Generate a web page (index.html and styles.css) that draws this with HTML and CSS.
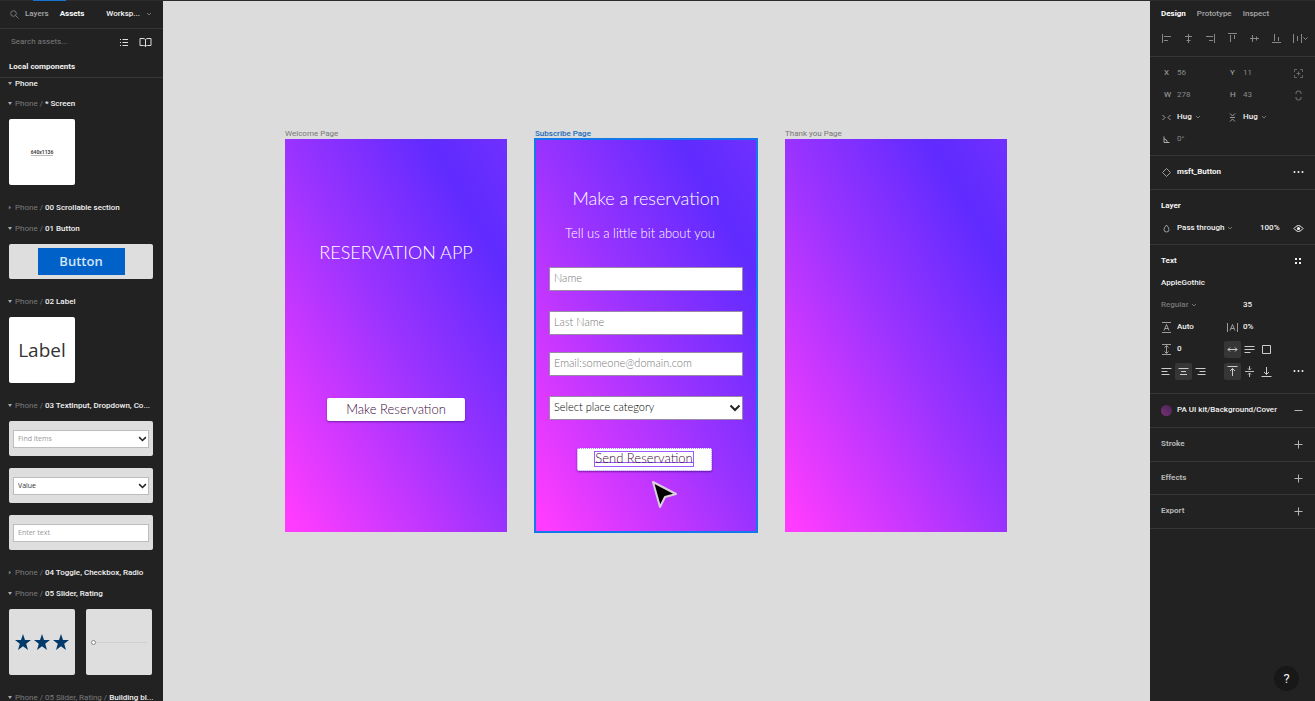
FILE: index.html
```html
<!DOCTYPE html>
<html lang="en">
<head>
<meta charset="utf-8">
<title>Reservation app</title>
<link rel="stylesheet" href="styles.css">
</head>
<body>
<svg class="defs" aria-hidden="true">
  <symbol id="chev" viewBox="0 0 6 6"><path d="M1 2l2 2 2-2" fill="none" stroke="currentColor" stroke-width=".8"/></symbol>
  <symbol id="bold-chev" viewBox="0 0 12 8"><path d="M1.500 1.500L6 6l4.500-4.500" fill="none" stroke="currentColor" stroke-width="2"/></symbol>
  <symbol id="plus" viewBox="0 0 11 11"><path d="M5.500 1.500v8M1.500 5.500h8" fill="none" stroke="currentColor"/></symbol>
  <symbol id="dots" viewBox="0 0 12 4"><g fill="currentColor"><circle cx="1.500" cy="2" r="1"/><circle cx="5.500" cy="2" r="1"/><circle cx="9.500" cy="2" r="1"/></g></symbol>
  <symbol id="star" viewBox="0 0 16 16"><path d="M8 0l2 5.900 6 .1-4.800 3.700L13 16l-5-3.700L3 16l1.800-6.300L0 6l6-.1z" fill="#003a6b"/></symbol>
</svg>
<div class="topbar"><span class="topbar-active"></span></div>
<div class="app">
  <aside class="left">
    <nav class="left-tabs">
      <svg class="i11 dim" viewBox="0 0 11 11"><circle cx="4.500" cy="4.500" r="2.800" fill="none" stroke="currentColor" stroke-width=".8"/><path d="M6.700 6.700L9.500 9.500" stroke="currentColor" stroke-width=".8"/></svg>
      <button class="tab" type="button">Layers</button>
      <button class="tab on" type="button">Assets</button>
      <button class="tab page" type="button">Worksp... <svg class="chev"><use href="#chev"/></svg></button>
    </nav>
    <div class="search">
      <input class="search-box" type="text" placeholder="Search assets..." aria-label="Search assets">
      <button class="icon-btn" type="button" aria-label="List view"><svg class="i11" viewBox="0 0 11 11"><path d="M3.500 2.500H9M3.500 5.500H9M3.500 8.500H9M1 2.500h1M1 5.500h1M1 8.500h1" stroke="currentColor"/></svg></button>
      <button class="icon-btn" type="button" aria-label="Libraries"><svg class="i13" viewBox="0 0 13 11"><path d="M6.500 2.500Q5.500 1.500 4 1.500H1v7h3.500q1.500 0 2 1 .5-1 2-1H12v-7H9q-1.500 0-2.500 1zv7" fill="none" stroke="currentColor"/></svg></button>
    </div>
    <h2 class="local">Local components</h2>
    <div class="assets">
      <h3 class="group first"><span class="tri"></span>Phone</h3>
      <h3 class="group"><span class="tri"></span><span class="path">Phone /</span> * Screen</h3>
      <div class="items"><div class="thumb square white"><span class="size-label">640x1136</span></div></div>
      <h3 class="group"><span class="tri shut"></span><span class="path">Phone /</span> 00 Scrollable section</h3>
      <h3 class="group"><span class="tri"></span><span class="path">Phone /</span> 01 Button</h3>
      <div class="items"><div class="thumb wide"><button class="blue-btn" type="button">Button</button></div></div>
      <h3 class="group"><span class="tri"></span><span class="path">Phone /</span> 02 Label</h3>
      <div class="items"><div class="thumb square white"><span class="big-label">Label</span></div></div>
      <h3 class="group"><span class="tri"></span><span class="path">Phone /</span> 03 TextInput, Dropdown, Co...</h3>
      <div class="items">
        <div class="thumb wide"><span class="select-wrap"><select class="mini hint" aria-label="Find items"><option>Find items</option></select><svg class="mini-chev"><use href="#bold-chev"/></svg></span></div>
        <div class="thumb wide"><span class="select-wrap"><select class="mini" aria-label="Value"><option>Value</option></select><svg class="mini-chev"><use href="#bold-chev"/></svg></span></div>
        <div class="thumb wide"><input class="mini" type="text" placeholder="Enter text" aria-label="Enter text"></div>
      </div>
      <h3 class="group"><span class="tri shut"></span><span class="path">Phone /</span> 04 Toggle, Checkbox, Radio</h3>
      <h3 class="group"><span class="tri"></span><span class="path">Phone /</span> 05 Slider, Rating</h3>
      <div class="items pair">
        <div class="thumb square stars"><svg><use href="#star"/></svg><svg><use href="#star"/></svg><svg><use href="#star"/></svg></div>
        <div class="thumb square"><input class="slider" type="range" value="0" aria-label="Slider"></div>
      </div>
      <h3 class="group"><span class="tri"></span><span class="path">Phone / 05 Slider, Rating /</span> Building bl...</h3>
    </div>
  </aside>

  <main class="canvas">
    <section class="artboard">
      <h2 class="name">Welcome Page</h2>
      <div class="frame welcome">
        <h1 class="title">RESERVATION APP</h1>
        <button class="cta make" type="button">Make Reservation</button>
      </div>
    </section>
    <section class="artboard">
      <h2 class="name selected">Subscribe Page</h2>
      <form class="frame subscribe">
        <h1 class="title">Make a reservation</h1>
        <p class="sub">Tell us a little bit about you</p>
        <div class="fields">
          <input class="field" type="text" placeholder="Name" aria-label="Name">
          <input class="field last" type="text" placeholder="Last Name" aria-label="Last Name">
          <input class="field email" type="text" placeholder="Email:someone@domain.com" aria-label="Email">
          <span class="select-wrap place"><select class="field" aria-label="Place category"><option>Select place category</option></select><svg class="place-chev"><use href="#bold-chev"/></svg></span>
        </div>
        <button class="cta send" type="button"><span class="picked">Send Reservation</span></button>
        <svg class="cursor" viewBox="0 0 28 32"><path d="M3 3l7 25 5-10 11-3z" fill="#000" stroke="#d9d0dc" stroke-width="2" stroke-linejoin="round"/></svg>
      </form>
    </section>
    <section class="artboard">
      <h2 class="name">Thank you Page</h2>
      <div class="frame"></div>
    </section>
  </main>

  <aside class="right">
    <nav class="right-tabs">
      <button class="tab on" type="button">Design</button>
      <button class="tab" type="button">Prototype</button>
      <button class="tab" type="button">Inspect</button>
    </nav>
    <div class="aligns">
      <svg class="i11" viewBox="0 0 11 11"><path d="M1.500 1v9M3 3.500h7M3 7.500h4" stroke="currentColor"/></svg>
      <svg class="i11" viewBox="0 0 11 11"><path d="M5.500 1v9M2 3.500h7M3.500 7.500h4" stroke="currentColor"/></svg>
      <svg class="i11" viewBox="0 0 11 11"><path d="M9.500 1v9M1 3.500h7M4 7.500h4" stroke="currentColor"/></svg>
      <svg class="i11" viewBox="0 0 11 11"><path d="M1 .5h9M3.500 2v7M7.500 2v4" stroke="currentColor"/></svg>
      <svg class="i11" viewBox="0 0 11 11"><path d="M1 5.500h9M3.500 2v7M7.500 3.500v4" stroke="currentColor"/></svg>
      <svg class="i11" viewBox="0 0 11 11"><path d="M1 9.500h9M3.500 1v7M7.500 4v4" stroke="currentColor"/></svg>
      <svg class="i16" viewBox="0 0 16 11"><path d="M.5 1v9M8.500 1v9M4.500 3v5M10.500 4.500l2 2 2-2" fill="none" stroke="currentColor"/></svg>
    </div>
    <section class="block geometry">
      <div class="row"><label class="key" for="x">X</label><input class="num" id="x" value="56"><label class="key" for="y">Y</label><input class="num" id="y" value="11"><svg class="i11 mid" viewBox="0 0 11 11"><path d="M1.500 4V1.500H4M7 1.500h2.500V4M9.500 7v2.500H7M4 9.500H1.500V7M3.500 5.500h4M5.500 3.500v4" fill="none" stroke="currentColor" stroke-width=".8"/></svg></div>
      <div class="row"><label class="key" for="w">W</label><input class="num" id="w" value="278"><label class="key" for="h">H</label><input class="num" id="h" value="43"><svg class="i11 mid" viewBox="0 0 11 11"><path d="M3 4V3q0-2 2.500-2T8 3v1M3 7v1q0 2 2.500 2T8 8V7" fill="none" stroke="currentColor"/></svg></div>
      <div class="row"><svg class="i11" viewBox="0 0 11 11"><path d="M1.500 3L4 5.500 1.500 8M9.500 3L7 5.500 9.500 8" fill="none" stroke="currentColor" stroke-width=".9"/></svg><button class="drop" type="button">Hug <svg class="chev"><use href="#chev"/></svg></button><svg class="i11" viewBox="0 0 11 11"><path d="M3 1.500L5.500 4 8 1.500M3 9.500L5.500 7 8 9.500M3 5.500h5" fill="none" stroke="currentColor" stroke-width=".9"/></svg><button class="drop" type="button">Hug <svg class="chev"><use href="#chev"/></svg></button></div>
      <div class="row"><svg class="i11" viewBox="0 0 11 11"><path d="M3 2.500v6h5.500M3 5q3 0 3.500 3.500" fill="none" stroke="currentColor"/></svg><input class="num" aria-label="Rotation" value="0°"></div>
    </section>
    <section class="block short">
      <div class="row"><svg class="i11" viewBox="0 0 11 11"><path d="M5.500 1.500l4 4-4 4-4-4z" fill="none" stroke="currentColor" stroke-width=".9"/></svg><strong class="wide-cell name-cell">msft_Button</strong><button class="icon-btn bright" type="button" aria-label="More"><svg class="dots"><use href="#dots"/></svg></button></div>
    </section>
    <section class="block">
      <h3 class="row"><span class="head">Layer</span></h3>
      <div class="row pass"><svg class="i11" viewBox="0 0 11 11"><path d="M5.500 2Q8 4.700 8 6.500a2.500 2.500 0 0 1-5 0Q3 4.700 5.500 2z" fill="none" stroke="currentColor" stroke-width=".9"/></svg><button class="drop" type="button">Pass through <svg class="chev"><use href="#chev"/></svg></button><span>100%</span><button class="icon-btn bright" type="button" aria-label="Visibility"><svg class="i11" viewBox="0 0 11 11"><path d="M1 5.500q4.500-6 9 0-4.500 6-9 0z" fill="none" stroke="currentColor"/><circle cx="5.500" cy="5.500" r="1.600" fill="currentColor"/></svg></button></div>
    </section>
    <section class="block text-block">
      <h3 class="row"><span class="head">Text</span><svg class="i11 bright" viewBox="0 0 11 11"><path d="M2 2h2v2H2zM6 2h2v2H6zM2 6h2v2H2zM6 6h2v2H6z" fill="currentColor"/></svg></h3>
      <div class="row"><span class="head font">AppleGothic</span></div>
      <div class="row"><button class="drop style" type="button">Regular <svg class="chev"><use href="#chev"/></svg></button><input class="num lit" aria-label="Font size" value="35"></div>
      <div class="row"><svg class="i11" viewBox="0 0 11 11"><path d="M1 .5h9M1 10.500h9M3 8.500l2.500-6 2.500 6M4 6.500h3" fill="none" stroke="currentColor" stroke-width=".9"/></svg><input class="num lit" aria-label="Line height" value="Auto"><svg class="i11" viewBox="0 0 11 11"><path d="M.5 1v9M10.500 1v9M3 8.500l2.500-6 2.500 6M4 6.500h3" fill="none" stroke="currentColor" stroke-width=".9"/></svg><input class="num lit" aria-label="Letter spacing" value="0%"></div>
      <div class="row"><svg class="i11" viewBox="0 0 11 11"><path d="M1 .5h9M1 10.500h9M5.500 2v7M3.500 3.500l2-2 2 2M3.500 7.500l2 2 2-2" fill="none" stroke="currentColor" stroke-width=".9"/></svg><input class="num lit" aria-label="Paragraph spacing" value="0">
        <div class="tools"><button class="tool on" type="button" aria-label="Auto width"><svg class="i11" viewBox="0 0 11 11"><path d="M1 5.500h9M3 3.500l-2 2 2 2M8 3.500l2 2-2 2" fill="none" stroke="currentColor"/></svg></button><button class="tool" type="button" aria-label="Auto height"><svg class="i11" viewBox="0 0 11 11"><path d="M.5 2.500h10M.5 5.500h10M.5 8.500h6" stroke="currentColor"/></svg></button><button class="tool" type="button" aria-label="Fixed size"><svg class="i11" viewBox="0 0 11 11"><path d="M1.500 1.500h8v8h-8z" fill="none" stroke="currentColor"/></svg></button></div></div>
      <div class="row"><div class="tools aligned"><button class="tool" type="button" aria-label="Align left"><svg class="i11" viewBox="0 0 11 11"><path d="M.5 2.500h10M.5 5.500h6M.5 8.500h8" stroke="currentColor"/></svg></button><button class="tool on" type="button" aria-label="Align centre"><svg class="i11" viewBox="0 0 11 11"><path d="M.5 2.500h10M3 5.500h5M2 8.500h7" stroke="currentColor"/></svg></button><button class="tool" type="button" aria-label="Align right"><svg class="i11" viewBox="0 0 11 11"><path d="M.5 2.500h10M4.500 5.500h6M2.500 8.500h8" stroke="currentColor"/></svg></button></div>
        <div class="tools"><button class="tool on" type="button" aria-label="Align top"><svg class="i11" viewBox="0 0 11 11"><path d="M.5 .5h10M5.500 2.500V10M3 5l2.500-2.500L8 5" fill="none" stroke="currentColor"/></svg></button><button class="tool" type="button" aria-label="Align middle"><svg class="i11" viewBox="0 0 11 11"><path d="M1 5.500h9M5.500 0v4M4 2.500l1.500 1.500L7 2.500M5.500 11V7M4 8.500L5.500 7 7 8.500" fill="none" stroke="currentColor" stroke-width=".9"/></svg></button><button class="tool" type="button" aria-label="Align bottom"><svg class="i11" viewBox="0 0 11 11"><path d="M.5 10.500h10M5.500 1v7.500M3 6l2.500 2.500L8 6" fill="none" stroke="currentColor"/></svg></button></div>
        <button class="icon-btn bright more" type="button" aria-label="More"><svg class="dots"><use href="#dots"/></svg></button></div>
    </section>
    <section class="block short">
      <div class="row"><span class="swatch"></span><span class="wide-cell">PA UI kit/Background/Cover</span><button class="icon-btn" type="button" aria-label="Remove"><svg class="i11" viewBox="0 0 11 11"><path d="M1.500 5.500h8" stroke="currentColor"/></svg></button></div>
    </section>
    <section class="block short"><h3 class="row quiet"><span class="head">Stroke</span><button class="icon-btn" type="button" aria-label="Add stroke"><svg class="i11"><use href="#plus"/></svg></button></h3></section>
    <section class="block"><h3 class="row quiet"><span class="head">Effects</span><button class="icon-btn" type="button" aria-label="Add effect"><svg class="i11"><use href="#plus"/></svg></button></h3></section>
    <section class="block short"><h3 class="row quiet"><span class="head">Export</span><button class="icon-btn" type="button" aria-label="Add export"><svg class="i11"><use href="#plus"/></svg></button></h3></section>
    <button class="help" type="button" aria-label="Help">?</button>
  </aside>
</div>
</body>
</html>
```

FILE: styles.css
```css
* { box-sizing: border-box; }
body {
  margin: 0;
  height: 100vh;
  display: flex;
  flex-direction: column;
  overflow: hidden;
  background: #222;
  color: #f2f2f2;
  font: 500 8px/12px Roboto, Inter, sans-serif;
}
h1, h2, h3, p { margin: 0; font: inherit; }
button, input, select {
  margin: 0;
  padding: 0;
  border: 0;
  background: none;
  color: inherit;
  font: inherit;
  min-width: 0;
  appearance: none;
  border-radius: 0;
}
svg { display: block; flex: none; }
.defs { position: absolute; width: 0; height: 0; }
.topbar { height: 1px; flex: none; background: #2c2c2c; display: flex; }
.topbar-active { margin-left: 33px; width: 33px; background: #1673d1; }
.app { flex: 1; min-height: 0; display: flex; }

.i11 { width: 11px; height: 11px; }
.i13 { width: 13px; height: 11px; }
.i16 { width: 16px; height: 11px; }
.dots { width: 12px; height: 4px; }
.chev { width: 6px; height: 6px; color: #888; }
.dim { color: #888; }
.icon-btn { display: grid; place-items: center; color: #b4b4b4; }
.bright { color: #f2f2f2; }
.tab { color: #a8a8a8; white-space: nowrap; }
.tab.on { color: #fff; font-weight: 700; }
.tab.page { color: #f2f2f2; display: flex; align-items: center; gap: 6px; margin-left: auto; }

/* Assets panel */
.left { width: 163px; flex: none; display: flex; flex-direction: column; overflow: hidden; }
.left-tabs { height: 28px; flex: none; display: flex; align-items: center; gap: 11px; padding: 0 11px 1px 9px; border-bottom: 1px solid #363636; }
.left-tabs .dim { margin-right: -6px; }
.search { height: 27px; flex: none; display: flex; align-items: center; gap: 9px; padding: 0 11px 1px; }
.search-box { flex: 1; }
.search .icon-btn { color: #ddd; }
.search-box::placeholder { color: #7c7c7c; opacity: 1; font-weight: 400; }
.local { height: 22px; flex: none; padding: 5px 9px 0; font-weight: 700; border-bottom: 1px solid #363636; }
.group { height: 21px; display: flex; align-items: center; gap: 2px; padding-left: 8px; white-space: nowrap; }
.group.first { height: 15px; padding-bottom: 4px; }
.path { color: #7a7a7a; font-weight: 400; }
.tri { width: 4px; height: 3px; margin-right: 1px; background: #aaa; clip-path: polygon(0 0, 100% 0, 50% 100%); }
.tri.shut { height: 4px; background: #777; clip-path: polygon(20% 0, 80% 50%, 20% 100%); }
.items { padding: 5px 10px 12px 9px; display: flex; flex-direction: column; gap: 12px; }
.items.pair { flex-direction: row; gap: 11px; }
.thumb { background: #dedede; border-radius: 2px; display: flex; align-items: center; justify-content: center; }
.square { width: 66px; height: 66px; }
.wide { height: 35px; padding: 0 4px; }
.white { background: #fff; }
.size-label { font: 700 5px/6px Roboto, sans-serif; color: #444; border-bottom: 1px solid #bbb; }
.blue-btn { width: 87px; height: 27px; background: #0062c8; color: #d5e6fa; font: 600 13px/27px "Open Sans", sans-serif; }
.big-label { font: 400 19px/28px "Open Sans", sans-serif; color: #333; }
.select-wrap { position: relative; flex: 1; display: flex; }
.mini { flex: 1; height: 18px; padding: 0 4px; background: #fff; border: 1px solid #bdbdbd; color: #333; font: 400 7px/16px "Open Sans", sans-serif; }
.mini.hint { color: #999; }
.mini::placeholder { color: #999; opacity: 1; }
.mini-chev { position: absolute; right: 2px; top: 6px; width: 9px; height: 6px; color: #222; }
.stars { gap: 3px; }
.stars svg { width: 16px; height: 16px; }
.slider { width: 56px; height: 5px; background: linear-gradient(#cfcfcf, #cfcfcf) center / 100% 1px no-repeat; }
.slider::-webkit-slider-thumb { appearance: none; width: 5px; height: 5px; border: 1px solid #888; border-radius: 50%; background: #fff; }

/* Canvas */
.canvas { flex: 1; min-width: 0; background: #dcdcdc; display: flex; align-items: flex-start; gap: 28px; padding: 127px 0 0 122px; overflow: hidden; }
.artboard { flex: none; width: 222px; }
.name { height: 11px; line-height: 12px; color: #777; font-weight: 400; }
.name.selected { color: #1a69b8; font-weight: 500; }
.frame {
  position: relative;
  height: 393px;
  background: linear-gradient(to top right, #ff3cff 3%, #9a33ff 50%, #5f2bff 83%, #7030ff 100%);
  display: flex;
  flex-direction: column;
  align-items: center;
  color: #fff;
  font: 300 13px/20px Lato, "Open Sans", sans-serif;
}
.title { font-size: 18px; line-height: 24px; }
.cta { height: 23px; border-radius: 2px; background: #fff; color: #3c0a3e; box-shadow: 0 1px 2px rgba(40, 0, 80, .5); line-height: 20px; padding-bottom: 2px; }
.welcome { padding-top: 101px; }
.make { width: 138px; margin-top: 134px; }
.subscribe { padding-top: 47px; outline: 2px solid #1479e8; outline-offset: -1px; }
.sub { margin-top: 13px; padding-right: 12px; }
.fields { align-self: stretch; display: flex; flex-direction: column; padding: 24px 14px 28px; }
.field { flex: 1; height: 24px; flex-basis: 24px; padding: 0 4px 3px; background: #fff; border: 1px solid #9a8aa8; color: #000; font-size: 11px; line-height: 18px; }
.field::placeholder { color: #777; opacity: 1; }
.last { margin-top: 20px; }
.email { margin-top: 17px; }
.place { margin-top: 20px; }
.place-chev { position: absolute; right: 2px; top: 8px; width: 12px; height: 8px; color: #222; }
.send { width: 135px; margin-right: 4px; border: 1px dotted #b58cff; padding: 0 0 1px; display: grid; place-items: center; }
.picked { height: 16px; line-height: 13px; border: 1px solid #9a5cff; background: linear-gradient(#9a5cff, #9a5cff) 0 10px / 100% 1px no-repeat; }
.cursor { position: absolute; left: 115px; top: 340px; width: 28px; height: 32px; }

/* Design panel */
.right { position: relative; width: 165px; flex: none; display: flex; flex-direction: column; }
.right-tabs { height: 26px; flex: none; display: flex; align-items: center; gap: 11px; padding: 0 11px; }
.aligns { height: 30px; flex: none; display: flex; align-items: center; gap: 11px; padding: 0 6px 6px 11px; color: #888; border-bottom: 1px solid #363636; }
.block { padding: 5px 11px; border-bottom: 1px solid #363636; }
.short { padding-bottom: 6px; }
.text-block { padding-bottom: 11px; }
.row { height: 22px; display: grid; grid-template-columns: 16px 50px 16px 50px 11px; align-items: center; color: #f2f2f2; }
.row > .i11 { color: #aaa; }
.row > .mid { color: #777; }
.row > .bright { color: #f2f2f2; grid-column: 5; }
.key { color: #aaa; font-weight: 400; padding-left: 3px; }
.num { width: 40px; color: #888; font-weight: 400; }
.num.lit { color: #f2f2f2; font-weight: 500; }
.drop { display: flex; align-items: center; gap: 3px; white-space: nowrap; }
.drop.style { grid-column: 1 / 4; color: #777; }
.wide-cell { grid-column: 2 / 5; white-space: nowrap; }
.name-cell { font-weight: 700; }
.row .icon-btn { grid-column: 5; }
.head { grid-column: 1 / 5; font-weight: 700; }
.head.font { font-weight: 500; }
.quiet .head { color: #b4b4b4; }
.pass { grid-template-columns: 16px 83px 33px 11px; }
.row.pass .icon-btn { grid-column: 4; }
.tools { grid-column: 3 / 5; display: flex; margin-left: -3px; color: #ccc; }
.tools.aligned { grid-column: 1 / 3; }
.tool { width: 17px; height: 17px; border-radius: 2px; display: grid; place-items: center; }
.tool.on { background: #363636; }
.swatch { width: 11px; height: 11px; border-radius: 50%; background: linear-gradient(45deg, #7a3478, #4b2157); }
.help { position: absolute; right: 16px; bottom: 10px; width: 25px; height: 25px; border-radius: 50%; background: #181818; font-size: 13px; line-height: 25px; font-weight: 400; }
```
